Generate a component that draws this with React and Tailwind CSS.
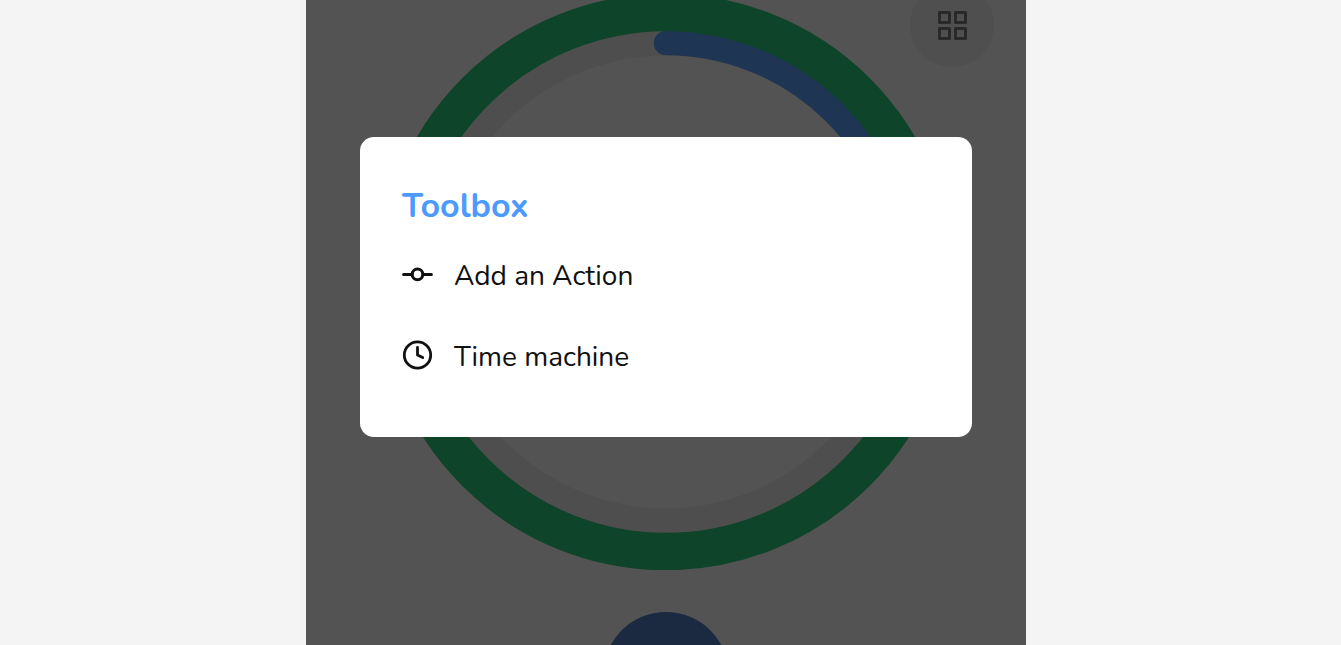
import React from "react";

function GridIcon() {
  return (
    <svg width="30" height="30" viewBox="0 0 30 30" fill="none" stroke="#292929" strokeWidth="3" strokeLinejoin="round" aria-hidden="true">
      <rect x="2.5" y="2.5" width="10" height="10" />
      <rect x="18.5" y="2.5" width="10" height="10" />
      <rect x="2.5" y="18.5" width="10" height="10" />
      <rect x="18.5" y="18.5" width="10" height="10" />
    </svg>
  );
}

function CommitIcon() {
  return (
    <svg className="size-8 shrink-0" viewBox="0 0 32 32" fill="none" stroke="currentColor" strokeWidth="3" strokeLinecap="round" aria-hidden="true">
      <circle cx="15.5" cy="16.4" r="5.3" />
      <path d="M1.6 16.4H10M21 16.4h8.4" />
    </svg>
  );
}

function ClockIcon() {
  return (
    <svg className="size-8 shrink-0" viewBox="0 0 32 32" fill="none" stroke="currentColor" strokeWidth="2.8" strokeLinecap="round" strokeLinejoin="round" aria-hidden="true">
      <circle cx="15.5" cy="16" r="13.2" />
      <path d="M15.5 8.3V16l5.2 2.6" />
    </svg>
  );
}

function ProgressRing() {
  return (
    <svg className="-mt-1.5 size-[576px] shrink-0" viewBox="0 0 576 576" fill="none" role="img" aria-label="Progress">
      <circle cx="288" cy="288" r="239" stroke="#4e4e4e" strokeWidth="25" />
      <path d="M288 49A239 239 0 0 1 527 288" stroke="#1f3554" strokeWidth="24.5" strokeLinecap="round" />
      <circle cx="288" cy="288" r="269.5" stroke="#0e4429" strokeWidth="37.5" />
    </svg>
  );
}

function ToolItem({ icon, children }) {
  return (
    <li>
      <button type="button" className="flex w-full items-center gap-5 text-left text-[28px] leading-10 text-[#111111]">
        {icon}
        <span className="pt-1">{children}</span>
      </button>
    </li>
  );
}

export default function App() {
  return (
    <div className="flex h-screen justify-center overflow-hidden bg-[#f4f4f4] pr-[9px] font-['Nunito','Lato',sans-serif]">
      <main className="relative flex w-full max-w-[720px] flex-col items-center overflow-hidden bg-[#535353]">
        <button
          type="button"
          aria-label="Open toolbox"
          className="absolute -top-[17px] right-8 flex size-[84px] items-center justify-center rounded-full bg-[#4f4f4f]"
        >
          <GridIcon />
        </button>
        <ProgressRing />
        <button type="button" aria-label="Start" className="mt-[42px] size-[126px] shrink-0 rounded-full bg-[#1b2a41]" />

        <div className="absolute inset-0 flex items-start justify-center pt-[137px]">
          <section
            role="dialog"
            aria-modal="true"
            aria-labelledby="toolbox-title"
            className="w-[85%] rounded-[14px] bg-white px-[42px] pt-[45px] pb-[60px]"
          >
            <h1 id="toolbox-title" className="text-[34px] leading-[48px] font-bold text-[#4d9aff]">
              Toolbox
            </h1>
            <ul className="mt-[22px] flex flex-col gap-[37px]">
              <ToolItem icon={<CommitIcon />}>Add an Action</ToolItem>
              <ToolItem icon={<ClockIcon />}>Time machine</ToolItem>
            </ul>
          </section>
        </div>
      </main>
    </div>
  );
}
